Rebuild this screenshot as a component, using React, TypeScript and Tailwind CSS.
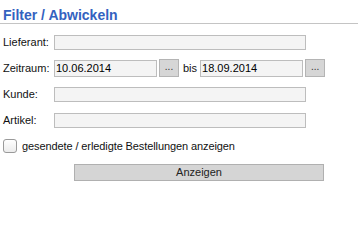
import React from "react";

function Field({ label, children }: { label: string; children: React.ReactNode }) {
  return (
    <div className="flex items-center h-[26px]">
      <span className="w-[51px] shrink-0">{label}</span>
      {children}
    </div>
  );
}

function TextBox({ value = "", width = "w-[252px]", height = "h-[15px]" }: { value?: string; width?: string; height?: string }) {
  return (
    <div
      className={`${width} ${height} border border-[#bdbdbd] bg-[#f4f4f4] pl-[1px] flex items-center text-[11px] leading-none text-black`}
    >
      {value}
    </div>
  );
}

function DotsButton() {
  return (
    <div className="w-[20px] h-[18px] border border-[#b4b4b4] bg-[#d6d6d6] flex items-center justify-center text-[10px] leading-none text-[#333] pb-[2px]">
      ...
    </div>
  );
}

export default function App() {
  return (
    <div className="w-[362px] h-[244px] bg-white text-[11px] text-[#111] font-['Liberation_Sans',Arial,sans-serif]">
      <div className="h-[24px] border-b border-[#c4c4c4] mr-[4px]">
        <div className="pl-[3px] pt-[7px] text-[14px] leading-4 font-bold text-[#3362c0]">Filter / Abwickeln</div>
      </div>

      <div className="pl-[3px] pt-[5px]">
        <Field label="Lieferant:">
          <TextBox />
        </Field>

        <Field label="Zeitraum:">
          <TextBox value="10.06.2014" width="w-[103px]" height="h-[17px]" />
          <div className="ml-[2px]">
            <DotsButton />
          </div>
          <span className="ml-[4px] mr-[3px]">bis</span>
          <TextBox value="18.09.2014" width="w-[103px]" height="h-[17px]" />
          <div className="ml-[2px]">
            <DotsButton />
          </div>
        </Field>

        <Field label="Kunde:">
          <TextBox />
        </Field>

        <Field label="Artikel:">
          <TextBox />
        </Field>

        <div className="flex items-center h-[26px]">
          <div className="w-[14px] h-[14px] rounded-[3px] border border-[#9a9a9a] bg-gradient-to-b from-white to-[#ececec]" />
          <span className="ml-[5px] tracking-[-0.1px]">gesendete / erledigte Bestellungen anzeigen</span>
        </div>

        <div className="flex items-center h-[27px]">
          <div className="ml-[71px] w-[250px] h-[17px] border border-[#b0b0b0] bg-[#d5d5d5] flex items-center justify-center text-[11px] leading-none text-[#222]">
            Anzeigen
          </div>
        </div>
      </div>
    </div>
  );
}
